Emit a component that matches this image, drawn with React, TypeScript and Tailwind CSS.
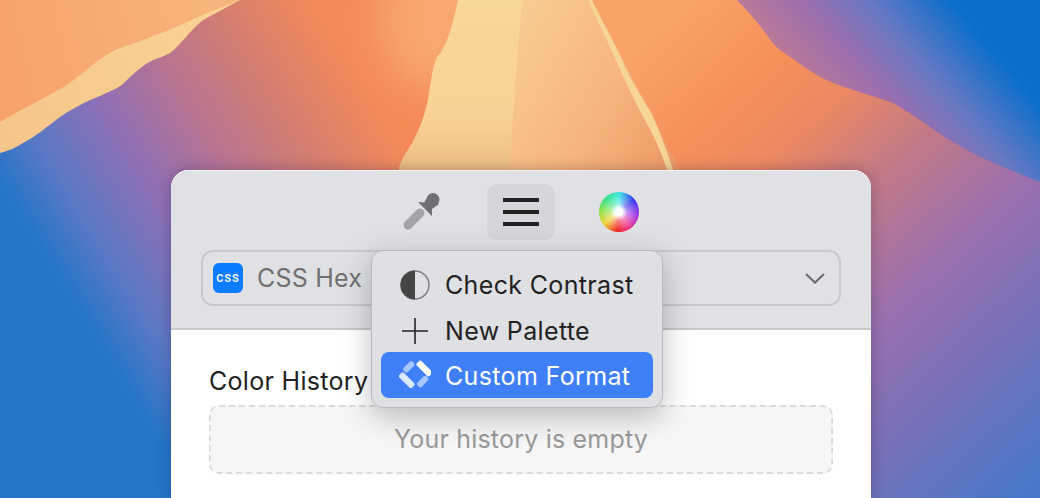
const FONT = "font-['Inter','Liberation_Sans',sans-serif]"

// wallpaper, a drawing that sits behind the window
function Wallpaper() {
  return (
    <svg className="absolute inset-0" width="1040" height="498" viewBox="0 0 1040 498">
      <defs>
        <linearGradient id="left" gradientUnits="userSpaceOnUse" x1="30" y1="230" x2="340" y2="40">
          <stop offset="0" stopColor="#2575c8" />
          <stop offset="0.15" stopColor="#5c78c4" />
          <stop offset="0.35" stopColor="#8f6fb5" />
          <stop offset="0.55" stopColor="#b87492" />
          <stop offset="0.75" stopColor="#d27d72" />
          <stop offset="1" stopColor="#f58a58" />
        </linearGradient>
        <linearGradient id="sky" gradientUnits="userSpaceOnUse" x1="740" y1="0" x2="862" y2="-104">
          <stop offset="0" stopColor="#b87898" />
          <stop offset="0.3" stopColor="#9c6eae" />
          <stop offset="0.6" stopColor="#6878c2" />
          <stop offset="1" stopColor="#0a6fcc" />
        </linearGradient>
        <linearGradient id="right" gradientUnits="userSpaceOnUse" x1="640" y1="40" x2="1040" y2="470">
          <stop offset="0" stopColor="#f8a468" />
          <stop offset="0.18" stopColor="#f6905a" />
          <stop offset="0.3" stopColor="#ec8862" />
          <stop offset="0.44" stopColor="#c47a85" />
          <stop offset="0.62" stopColor="#9c70ae" />
          <stop offset="0.78" stopColor="#7a70b8" />
          <stop offset="1" stopColor="#4a78c8" />
        </linearGradient>
        <linearGradient id="cream" x1="0" y1="0" x2="0" y2="1">
          <stop offset="0" stopColor="#f9d797" />
          <stop offset="0.7" stopColor="#f8d294" />
          <stop offset="1" stopColor="#ecbd82" />
        </linearGradient>
        <linearGradient id="peak" gradientUnits="userSpaceOnUse" x1="520" y1="20" x2="690" y2="120">
          <stop offset="0" stopColor="#f8cb90" />
          <stop offset="0.6" stopColor="#f7b47c" />
          <stop offset="1" stopColor="#ee9c68" />
        </linearGradient>
        <linearGradient id="band" gradientUnits="userSpaceOnUse" x1="0" y1="150" x2="240" y2="0">
          <stop offset="0" stopColor="#f6c48a" />
          <stop offset="1" stopColor="#f9d595" />
        </linearGradient>
        <linearGradient id="peach" gradientUnits="userSpaceOnUse" x1="0" y1="60" x2="240" y2="0">
          <stop offset="0" stopColor="#f6a36a" />
          <stop offset="1" stopColor="#f8b67e" />
        </linearGradient>
        <filter id="soft" x="-50%" y="-50%" width="200%" height="200%">
          <feGaussianBlur stdDeviation="20" />
        </filter>
      </defs>
      <rect width="1040" height="498" fill="url(#left)" />
      <ellipse cx="440" cy="20" rx="60" ry="70" fill="#f8a870" filter="url(#soft)" />
      <rect x="720" width="320" height="200" fill="url(#sky)" />
      {/* slope on the right */}
      <path
        d="M588 0 L737 0 C745 8 753 17 760 26 C768 36 772 44 780 50 C795 60 805 68 820 77 C832 83 842 86 853 90 C868 95 880 98 893 103 C903 108 910 114 920 120 C932 128 942 136 953 142 C965 149 975 155 987 160 C1005 168 1022 175 1040 182 L1040 498 L700 498 L672 170 Z"
        fill="url(#right)"
      />
      {/* top left band */}
      <path
        d="M240 0 L203 20 C190 30 180 46 170 53 C165 56 158 58 153 60 C143 65 135 72 127 80 C122 85 118 88 113 90 C105 94 97 97 90 100 C80 105 70 110 60 117 C48 126 35 137 23 143 C15 148 8 151 0 153 L0 0 Z"
        fill="url(#band)"
      />
      <path
        d="M240 0 L207 13 C180 26 150 38 120 48 C100 56 85 72 67 85 C45 98 20 110 0 122 L0 0 Z"
        fill="url(#peach)"
      />
      {/* centre ridge */}
      <path
        d="M458 0 L592 0 L680 170 L399 170 C400 163 403 158 408 150 C418 135 425 115 428 100 C430 88 432 70 437 57 C445 50 452 30 458 0 Z"
        fill="url(#peak)"
      />
      <path
        d="M458 0 L522 0 C518 50 512 120 510 170 L399 170 C400 163 403 158 408 150 C418 135 425 115 428 100 C430 88 432 70 437 57 C445 50 452 30 458 0 Z"
        fill="url(#cream)"
      />
      <path
        d="M588 0 L592 0 C600 18 613 40 622 60 C628 75 638 92 651 112 C659 130 667 150 673 170 L667 170 C661 150 653 135 646 122 C636 104 630 90 621 72 C611 48 600 26 588 0 Z"
        fill="#f7d595"
      />
    </svg>
  )
}

function Eyedropper() {
  return (
    <svg width="40" height="40" viewBox="0 0 40 40">
      <path d="M5 33 L17 21" fill="none" stroke="#a3a4a6" strokeWidth="9" strokeLinecap="round" />
      <path d="M15 10 L21 10.5 L26 3 L36 12 L29 17 L29 24 Z" fill="#6f7072" />
      <circle cx="30" cy="7.5" r="6.5" fill="#6f7072" />
    </svg>
  )
}

function ColorWheel() {
  return (
    <div className="h-10 w-10 rounded-full bg-[radial-gradient(circle_at_50%_50%,#ffffff_0%,#ffffff_12%,rgba(255,255,255,0.45)_30%,rgba(255,255,255,0)_70%),conic-gradient(from_0deg,#30e8e0,#3030f0_50deg,#a030e0_100deg,#f03080_150deg,#f02020_185deg,#f0d030_230deg,#90e040_270deg,#30e080_315deg,#30e8e0)]" />
  )
}

function CssBadge() {
  return (
    <div className="flex h-[30px] w-[30px] items-center justify-center rounded-[6px] bg-[#0a7cff] font-['Roboto',sans-serif] text-[11px] leading-none font-bold tracking-[1px] text-[#e8f2ff]">
      CSS
    </div>
  )
}

function Chevron() {
  return (
    <svg width="20" height="11" viewBox="0 0 20 11" fill="none" stroke="#6a6a6a" strokeWidth="2">
      <path d="M1 1 L10 9.5 L19 1" />
    </svg>
  )
}

function HalfCircle() {
  return (
    <svg width="30" height="30" viewBox="0 0 30 30">
      <circle cx="15" cy="15" r="14" fill="none" stroke="#808080" strokeWidth="1.5" />
      <path d="M15 0.5 A14.5 14.5 0 0 0 15 29.5 Z" fill="#444645" />
    </svg>
  )
}

function PlusIcon() {
  return (
    <svg width="30" height="30" viewBox="0 0 30 30" fill="none" stroke="#222" strokeWidth="1.6">
      <path d="M2 15 H28 M15 2 V28" />
    </svg>
  )
}

function CustomFormatIcon() {
  return (
    <svg width="32" height="30" viewBox="-16 -15 32 30">
      <rect x="-9" y="-3.25" width="18" height="6.5" rx="2" fill="#dce8ff" transform="translate(-8.2 5.3) rotate(45)" />
      <rect x="-9" y="-3.25" width="18" height="6.5" rx="2" fill="#ffffff" transform="translate(9.3 -6.5) rotate(45)" />
      <rect x="-6.25" y="-3" width="12.5" height="6" rx="2" fill="#a8c6ff" transform="translate(-6.2 -8.2) rotate(-45)" />
      <rect x="-6.25" y="-3" width="12.5" height="6" rx="2" fill="#a8c6ff" transform="translate(7.7 6.5) rotate(-45)" />
    </svg>
  )
}

function Menu() {
  return (
    <div className="absolute top-[80px] left-[200px] z-10 flex h-[158px] w-[292px] flex-col rounded-[12px] border border-[#b9babd] bg-[#dfe0e3] px-[9px] pt-[11px] tracking-[0.35px] shadow-[0_8px_30px_rgba(0,0,0,0.25)]">
      <div className="flex h-[46px] items-center gap-[15px] pl-[19px] text-[#222]">
        <HalfCircle />
        <span>Check Contrast</span>
      </div>
      <div className="flex h-[44px] items-center gap-[15px] pt-[1px] pl-[19px] text-[#222]">
        <PlusIcon />
        <span className="pt-[1px]">New Palette</span>
      </div>
      <div className="flex h-[46px] items-center gap-[14px] rounded-[8px] bg-[#3f80f8] pl-[18px] text-white">
        <CustomFormatIcon />
        <span className="pt-[2px]">Custom Format</span>
      </div>
    </div>
  )
}

export default function App() {
  return (
    <div className={`relative h-[498px] w-[1040px] overflow-hidden ${FONT}`}>
      <Wallpaper />
      <div className="relative flex justify-center pt-[170px]">
        <div className="relative ml-[2px] h-[328px] w-[700px] rounded-t-[18px] bg-white text-[25px] leading-none tracking-[0.2px] shadow-[0_0_14px_rgba(20,20,60,0.3)]">
          {/* header */}
          <div className="flex h-[160px] flex-col rounded-t-[18px] border-b-2 border-[#c6c7cb] bg-[#e0e1e4] px-[30px] pt-[14px] shadow-[inset_0_1px_0_rgba(255,255,255,0.6)]">
            <div className="flex justify-center gap-[30px]">
              <div className="flex h-[56px] w-[68px] items-center justify-center">
                <Eyedropper />
              </div>
              <div className="flex h-[56px] w-[68px] flex-col items-center justify-center gap-[8px] rounded-[10px] bg-[#d5d6d9]">
                <div className="h-[4px] w-[36px] bg-[#222]" />
                <div className="h-[4px] w-[36px] bg-[#222]" />
                <div className="h-[4px] w-[36px] bg-[#222]" />
              </div>
              <div className="flex h-[56px] w-[68px] items-center justify-center">
                <ColorWheel />
              </div>
            </div>
            <div className="mt-[10px] flex h-[56px] items-center justify-between rounded-[12px] border-2 border-[#c8c9cd] pr-[14px] pl-[10px] text-[#707070]">
              <div className="flex items-center gap-[14px]">
                <CssBadge />
                <span>CSS Hex</span>
              </div>
              <Chevron />
            </div>
          </div>
          {/* history */}
          <div className="px-[38px] pt-[39px] text-[#222]">
            <div className="h-[36px] tracking-[0.3px]">Color History</div>
            <div className="flex h-[69px] w-[624px] items-center justify-center rounded-[10px] border-2 border-dashed border-[#dcdcdc] bg-[#f6f6f6] text-[#999]">
              Your history is empty
            </div>
          </div>
          <Menu />
        </div>
      </div>
    </div>
  )
}
